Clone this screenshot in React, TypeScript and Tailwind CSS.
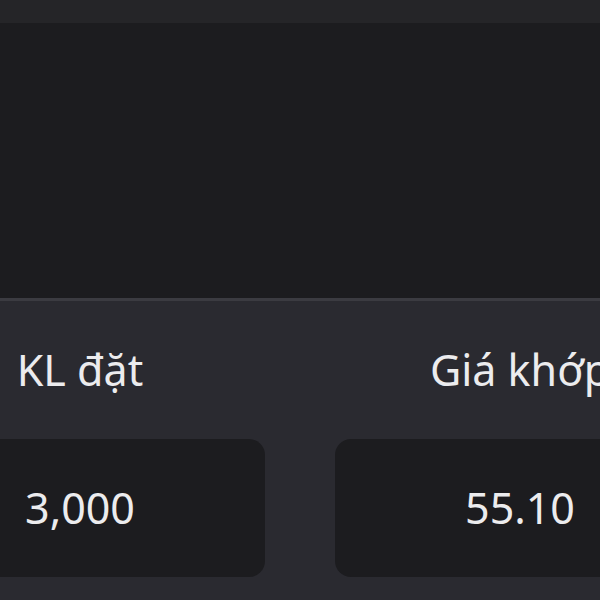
export default function App() {
  return (
    <div className="flex h-[600px] w-[600px] flex-col overflow-hidden bg-[#1c1c1f] font-['Noto_Sans',sans-serif] text-[#ececee]">
      <div className="h-[23px] shrink-0 bg-[#252528]" />
      <div className="h-[275px] shrink-0 bg-[#1c1c1f]" />
      <div className="h-[3px] shrink-0 bg-[#3b3b41]" />
      <div className="flex-1 bg-[#2a2a30] pt-[47px]">
        <div className="-ml-[105px] grid w-[810px] grid-cols-2 gap-x-[70px] gap-y-[47px]">
          <div className="text-center text-[43px] leading-[44px]">KL đặt</div>
          <div className="text-center text-[43px] leading-[44px]">Giá khớp</div>
          <div className="flex h-[138px] items-center justify-center rounded-[16px] bg-[#1c1c1f] text-[43px]">
            3,000
          </div>
          <div className="flex h-[138px] items-center justify-center rounded-[16px] bg-[#1c1c1f] text-[43px]">
            55.10
          </div>
        </div>
      </div>
    </div>
  );
}
